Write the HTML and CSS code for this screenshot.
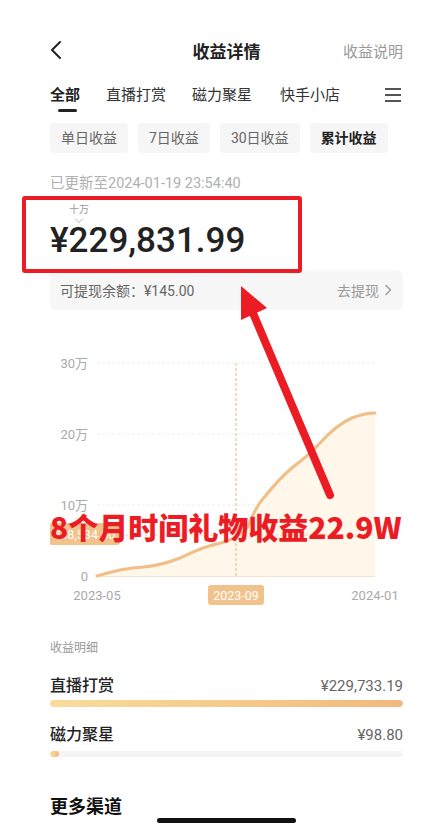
FILE: index.html
```html
<!DOCTYPE html>
<html lang="zh-CN">
<head>
  <meta charset="UTF-8">
  <meta name="viewport" content="width=device-width, initial-scale=1.0">
  <title>收益详情</title>
  <link rel="stylesheet" href="styles.css">
</head>
<body>
  <div class="page">
    <header class="topbar">
      <button class="back-btn" aria-label="返回">
        <svg width="12" height="20" viewBox="0 0 12 20"><path d="M10 2 L2 10 L10 18" fill="none" stroke="#222" stroke-width="2" stroke-linecap="round" stroke-linejoin="round"/></svg>
      </button>
      <h1 class="title">收益详情</h1>
      <a class="help-link">收益说明</a>
    </header>

    <nav class="tabs">
      <span class="tab active">全部</span>
      <span class="tab">直播打赏</span>
      <span class="tab">磁力聚星</span>
      <span class="tab">快手小店</span>
      <span class="menu-icon" aria-label="更多"><i></i><i></i><i></i></span>
    </nav>

    <div class="chips">
      <span class="chip">单日收益</span>
      <span class="chip">7日收益</span>
      <span class="chip">30日收益</span>
      <span class="chip active">累计收益</span>
    </div>

    <p class="updated">已更新至2024-01-19 23:54:40</p>

    <div class="total">
      <span class="unit-tip">十万</span>
      <div class="amount">¥229,831.99</div>
    </div>

    <div class="balance">
      <span>可提现余额：¥145.00</span>
      <span class="withdraw">去提现
        <svg width="8" height="12" viewBox="0 0 8 12"><path d="M2 1.5 L6.5 6 L2 10.5" fill="none" stroke="#999" stroke-width="1.4" stroke-linecap="round" stroke-linejoin="round"/></svg>
      </span>
    </div>

    <svg class="chart" width="353" height="285" viewBox="50 330 353 285">
      <!-- grid -->
      <g stroke="#eeeeee" stroke-width="1" stroke-dasharray="3 2">
        <line x1="97" y1="363" x2="375" y2="363"/>
        <line x1="97" y1="434" x2="375" y2="434"/>
        <line x1="97" y1="505" x2="375" y2="505"/>
      </g>
      <g class="axis-y" text-anchor="end">
        <text x="88" y="368">30万</text>
        <text x="88" y="439">20万</text>
        <text x="88" y="510">10万</text>
        <text x="88" y="581">0</text>
      </g>
      <!-- area under curve -->
      <path d="M97 576 C110 572 125 568 143 567 C155 566 165 564 180 558 C195 551 205 546 217 544 C228 542 238 537 247 528 C252 518 255 508 262 500 C270 490 282 476 293 467 C305 458 312 452 320 443 C330 432 340 423 352 418 C362 414 368 413 375 413 L375 576 Z" fill="#fef7ea"/>
      <line x1="97" y1="576.5" x2="375" y2="576.5" stroke="#f3e4d0" stroke-width="1"/>
      <!-- crosshair -->
      <line x1="120" y1="535" x2="375" y2="535" stroke="#f3d6b0" stroke-width="1" stroke-dasharray="3 2"/>
      <line x1="236" y1="363" x2="236" y2="577" stroke="#e8b87a" stroke-width="1" stroke-dasharray="3 2"/>
      <path d="M97 576 C110 572 125 568 143 567 C155 566 165 564 180 558 C195 551 205 546 217 544 C228 542 238 537 247 528 C252 518 255 508 262 500 C270 490 282 476 293 467 C305 458 312 452 320 443 C330 432 340 423 352 418 C362 414 368 413 375 413" fill="none" stroke="#f0be86" stroke-width="3" stroke-linecap="round"/>
      <!-- value tag -->
      <rect x="49" y="523" width="71" height="22" rx="3" fill="#f2c28c"/>
      <text class="tag-text" x="84.5" y="538.5" text-anchor="middle">¥38,534.00</text>
      <!-- x axis -->
      <g class="axis-x" text-anchor="middle">
        <text x="97" y="600">2023-05</text>
        <text x="375" y="600">2024-01</text>
      </g>
      <rect x="208" y="585" width="56" height="20" rx="3" fill="#f2c28c"/>
      <text class="tag-text" x="236" y="599.5" text-anchor="middle">2023-09</text>
    </svg>

    <p class="section-label">收益明细</p>

    <div class="source">
      <div class="source-row"><span class="source-name">直播打赏</span><span class="source-value">¥229,733.19</span></div>
      <div class="track"><div class="fill" style="width: 100%"></div></div>
    </div>
    <div class="source">
      <div class="source-row"><span class="source-name">磁力聚星</span><span class="source-value">¥98.80</span></div>
      <div class="track thin"><div class="fill" style="width: 9px"></div></div>
    </div>

    <h2 class="more">更多渠道</h2>

    <!-- annotations drawn over the page -->
    <div class="mark-box"></div>
    <svg class="mark-arrow" width="446" height="834" viewBox="0 0 446 834">
      <line x1="330" y1="495" x2="250" y2="306" stroke="#ec1c24" stroke-width="8" stroke-linecap="round"/>
      <polygon points="241,286 241,320 267,308" fill="#ec1c24"/>
    </svg>
    <div class="mark-text">8个月时间礼物收益22.9W</div>

    <div class="home-bar"></div>
  </div>
</body>
</html>
```

FILE: styles.css
```css
* {
  margin: 0;
  padding: 0;
  box-sizing: border-box;
}
body {
  font-family: Roboto, "Noto Sans CJK SC", sans-serif;
  background: #fff;
  color: #222;
}
.page {
  position: relative;
  width: 446px;
  height: 834px;
  padding: 28px 43px 0 50px;
  overflow: hidden;
}
.topbar {
  height: 44px;
  display: grid;
  grid-template-columns: 1fr auto 1fr;
  align-items: center;
}
.back-btn {
  border: none;
  background: none;
  justify-self: start;
  display: flex;
  align-items: center;
}
.title {
  font-size: 17px;
  font-weight: 700;
  color: #222;
}
.help-link {
  justify-self: end;
  font-size: 15px;
  color: #999;
}
.tabs {
  margin-top: 12px;
  display: flex;
  align-items: flex-start;
  gap: 26px;
}
.tab {
  position: relative;
  font-size: 15px;
  line-height: 22px;
  padding-bottom: 6px;
  color: #333;
}
.tab:nth-child(4) {
  margin-left: 2px;
}
.tab.active {
  font-weight: 700;
  color: #222;
}
.tab.active::after {
  content: '';
  position: absolute;
  left: 50%;
  bottom: 0;
  width: 19px;
  height: 3px;
  margin-left: -7px;
  border-radius: 2px;
  background: #222;
}
.menu-icon {
  margin-left: auto;
  margin-right: 2px;
  margin-top: 4px;
  display: flex;
  flex-direction: column;
  gap: 4px;
  width: 16px;
}
.menu-icon i {
  display: block;
  height: 2px;
  background: #555;
}
.chips {
  margin-top: 11px;
  display: flex;
  gap: 10px;
}
.chip {
  height: 30px;
  line-height: 30px;
  padding: 0 11px;
  border-radius: 4px;
  background: #f6f6f6;
  font-size: 14px;
  color: #666;
}
.chip.active {
  color: #222;
  font-weight: 700;
}
.updated {
  margin-top: 21px;
  font-size: 14.5px;
  line-height: 20px;
  color: #b0b0b0;
}
.total {
  margin-top: 9px;
}
.unit-tip {
  position: relative;
  display: block;
  width: 38px;
  text-align: center;
  margin-left: 10px;
  font-size: 10px;
  line-height: 14px;
  color: #999;
}
.unit-tip::after {
  content: '';
  position: absolute;
  left: 16px;
  top: 13px;
  width: 5px;
  height: 5px;
  border-right: 1px solid #ccc;
  border-bottom: 1px solid #ccc;
  transform: rotate(45deg);
}
.amount {
  margin-top: 4px;
  font-size: 35px;
  line-height: 40px;
  font-weight: 500;
  color: #222;
}
.balance {
  margin-top: 9px;
  height: 40px;
  padding: 0 11px 0 10px;
  border-radius: 6px;
  background: #f7f7f7;
  display: flex;
  align-items: center;
  justify-content: space-between;
  font-size: 14px;
  color: #666;
}
.withdraw {
  color: #999;
  display: flex;
  align-items: center;
  gap: 5px;
}
.chart {
  display: block;
  margin-top: 20px;
}
.axis-y text {
  font-size: 13px;
  fill: #aaa;
}
.axis-x text {
  font-size: 13px;
  fill: #aaa;
}
.tag-text {
  font-size: 12.5px;
  fill: #fff;
}
.section-label {
  margin-top: 24px;
  font-size: 12px;
  line-height: 18px;
  color: #999;
}
.source {
  margin-top: 17px;
}
.source + .source {
  margin-top: 16px;
}
.source-row {
  display: flex;
  justify-content: space-between;
  align-items: center;
  line-height: 24px;
}
.source-name {
  font-size: 16px;
  font-weight: 500;
  color: #222;
}
.source-value {
  font-size: 15px;
  color: #666;
}
.track {
  margin-top: 2px;
  height: 7px;
  border-radius: 4px;
  background: #f5f5f5;
  overflow: hidden;
}
.track.thin {
  margin-top: 4px;
  height: 6px;
}
.fill {
  height: 100%;
  border-radius: 4px;
  background: linear-gradient(90deg, #f9dc9b, #f2b97c);
}
.more {
  margin-top: 37px;
  font-size: 18px;
  line-height: 26px;
  font-weight: 700;
  color: #111;
}
.mark-box {
  position: absolute;
  left: 22px;
  top: 196px;
  width: 280px;
  height: 77px;
  border: 4px solid #ec1c24;
  border-radius: 3px;
}
.mark-arrow {
  position: absolute;
  left: 0;
  top: 0;
  pointer-events: none;
}
.mark-text {
  position: absolute;
  left: 50px;
  top: 506px;
  font-family: "Noto Sans CJK SC", sans-serif;
  font-size: 30px;
  line-height: 40px;
  font-weight: 900;
  color: #ec1c24;
  white-space: nowrap;
}
.home-bar {
  position: absolute;
  left: 157px;
  top: 818px;
  width: 139px;
  height: 5px;
  border-radius: 3px;
  background: #111;
}
```
